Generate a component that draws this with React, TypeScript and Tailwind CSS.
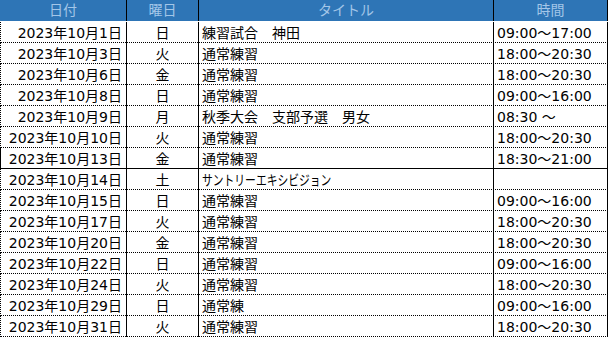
import React from "react";

const rows: [string, string, string, string][] = [
  ["2023年10月1日", "日", "練習試合　神田", "09:00～17:00"],
  ["2023年10月3日", "火", "通常練習", "18:00～20:30"],
  ["2023年10月6日", "金", "通常練習", "18:00～20:30"],
  ["2023年10月8日", "日", "通常練習", "09:00～16:00"],
  ["2023年10月9日", "月", "秋季大会　支部予選　男女", "08:30 ～"],
  ["2023年10月10日", "火", "通常練習", "18:00～20:30"],
  ["2023年10月13日", "金", "通常練習", "18:30～21:00"],
  ["2023年10月14日", "土", "サントリーエキシビジョン", ""],
  ["2023年10月15日", "日", "通常練習", "09:00～16:00"],
  ["2023年10月17日", "火", "通常練習", "18:00～20:30"],
  ["2023年10月20日", "金", "通常練習", "18:00～20:30"],
  ["2023年10月22日", "日", "通常練習", "09:00～16:00"],
  ["2023年10月24日", "火", "通常練習", "18:00～20:30"],
  ["2023年10月29日", "日", "通常練", "09:00～16:00"],
  ["2023年10月31日", "火", "通常練習", "18:00～20:30"],
];

export default function App() {
  return (
    <div
      className="w-[611px] h-[337px] bg-white text-black text-[14px] overflow-hidden"
      style={{ fontFamily: '"DejaVu Sans", "Noto Sans CJK JP", sans-serif' }}
    >
      <div className="grid grid-cols-[127px_72px_295px_114px] h-[22px] border-b border-white">
        {["日付", "曜日", "タイトル", "時間"].map((h) => (
          <div
            key={h}
            className="bg-[#2e75b6] text-[#a3c6e8] border-r border-black flex items-center justify-center leading-[21px]"
          >
            {h}
          </div>
        ))}
      </div>
      {rows.map((r, i) => (
        <div
          key={i}
          className={`grid grid-cols-[126px_72px_295px_114px] w-[608px] h-[21px] border-l border-black border-b ${
            i === 6 ? "border-solid" : "border-dotted"
          }`}
        >
          <div className="border-r border-black text-right pr-[4px] leading-[20px] pt-[1px] whitespace-nowrap">
            {r[0]}
          </div>
          <div className="border-r border-black text-center leading-[20px] pt-[1px]">{r[1]}</div>
          <div className="border-r border-black pl-[3px] leading-[20px] pt-[1px] whitespace-nowrap">
            {i === 7 ? (
              <span className="inline-block origin-left scale-x-[0.77]">{r[2]}</span>
            ) : (
              r[2]
            )}
          </div>
          <div className="border-r border-black pl-[3px] leading-[20px] pt-[1px] whitespace-nowrap">
            {r[3]}
          </div>
        </div>
      ))}
    </div>
  );
}
